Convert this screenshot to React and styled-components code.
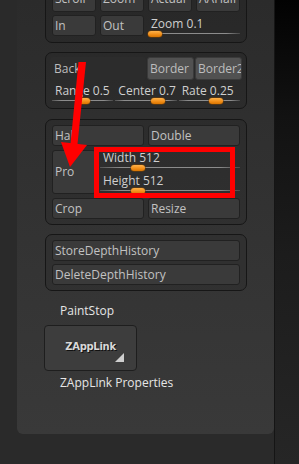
import React from 'react';
import styled, { createGlobalStyle } from 'styled-components';

const Global = createGlobalStyle`
  html, body { margin: 0; padding: 0; background: #2a2a2a; }
  body { font-family: "Open Sans", "Noto Sans", sans-serif; overflow: hidden; }
  * { box-sizing: border-box; }
`;

const Page = styled.div`
  position: relative;
  display: flex;
  width: 299px;
  height: 464px;
  overflow: hidden;
  background: #2a2a2a;
`;

const LeftGutter = styled.div`
  width: 17px;
  flex: none;
`;

const RightGutter = styled.div`
  width: 25px;
  flex: none;
  border-left: 1px solid #151515;
  background: linear-gradient(180deg, #020202 0%, #121212 25%, #1c1c1c 55%, #262626 100%);
`;

const Panel = styled.div`
  width: 257px;
  height: 434px;
  flex: none;
  display: flex;
  flex-direction: column;
  padding: 0 27px 0 28px;
  border-radius: 0 0 6px 6px;
  background: linear-gradient(180deg, #2b2b2b 0%, #313131 40%, #393939 100%);
`;

const Group = styled.div`
  display: flex;
  flex-direction: column;
  gap: ${p => p.$gap ?? 3}px;
  margin-top: ${p => p.$mt ?? 9}px;
  padding: ${p => p.$pad ?? '5px 6px'};
  border: 1px solid #161616;
  border-radius: 7px;
  background: rgba(0, 0, 0, 0.06);
`;

const Row = styled.div`
  position: relative;
  display: flex;
  gap: ${p => p.$gap ?? 4}px;
  height: ${p => p.$h ?? 21}px;
  margin: ${p => p.$m ?? '0'};
`;

const Btn = styled.div`
  flex: ${p => (p.$w ? 'none' : '1 1 0')};
  width: ${p => (p.$w ? `${p.$w}px` : 'auto')};
  display: flex;
  align-items: center;
  padding-left: 2px;
  padding-bottom: ${p => (p.$raise ? 5 : 0)}px;
  background: ${p => (p.$lit ? '#515151' : '#3a3a3a')};
  border: 1px solid ${p => (p.$lit ? '#3a3a3a' : '#212121')};
  border-radius: 3px;
  color: ${p => (p.$lit ? '#bdbdbd' : '#c2c2c2')};
  font-size: 12px;
  line-height: 14px;
  white-space: nowrap;
  overflow: hidden;
`;

const Well = styled.div`
  flex: 1 1 0;
  display: flex;
  align-items: center;
  padding-left: 4px;
  background: #2c2c2c;
  border-radius: 3px;
  color: #bdbdbd;
  font-size: 12px;
`;

const SliderBox = styled.div`
  position: relative;
  flex: ${p => (p.$w ? 'none' : '1 1 0')};
  width: ${p => (p.$w ? `${p.$w}px` : 'auto')};
  height: 22px;
  display: flex;
  flex-direction: column;
`;

const SliderLabel = styled.div`
  margin-top: 2px;
  padding-left: 3px;
  height: 14px;
  line-height: 14px;
  font-size: 12px;
  color: #cfcfcf;
  white-space: nowrap;
`;

const Track = styled.div`
  position: relative;
  margin-top: 2px;
  height: 1px;
  background: linear-gradient(90deg, rgba(140,140,140,0.4) 0%, #8c8c8c 15%, #8c8c8c 85%, rgba(140,140,140,0.3) 100%);
`;

const Handle = styled.div`
  position: absolute;
  top: -2px;
  width: 14px;
  height: 6px;
  border-radius: 3px;
  background: linear-gradient(180deg, #ffb24a 0%, #f08c16 60%, #d87400 100%);
  box-shadow: 0 0 0 0.5px #7a4000;
`;

const Column = styled.div`
  flex: 1 1 0;
  display: flex;
  flex-direction: column;
  gap: 0;
  margin-top: -1px;
`;

const RedBox = styled.div`
  position: absolute;
  left: 42px;
  top: -3px;
  width: 141px;
  height: 51px;
  border: 5px solid #ff0000;
  pointer-events: none;
`;

const Caption = styled.div`
  margin: ${p => p.$m};
  padding-left: 15px;
  height: 16px;
  line-height: 16px;
  font-size: 12px;
  color: #e6e6e6;
`;

const PluginBtn = styled.div`
  position: relative;
  width: 93px;
  height: 46px;
  margin: 6px 0 0 -1px;
  display: flex;
  align-items: center;
  justify-content: center;
  padding-bottom: 4px;
  background: #3d3d3d;
  border: 1px solid #1e1e1e;
  border-radius: 4px;
  font-family: "DejaVu Sans", sans-serif;
  font-weight: bold;
  font-size: 10px;
  color: #d8d8d8;
  text-shadow: 1px 1px 0 #111;
  letter-spacing: -0.3px;
`;

const Corner = styled.svg`
  position: absolute;
  right: 12px;
  bottom: 8px;
`;

const Arrow = styled.svg`
  position: absolute;
  left: 0;
  top: 0;
  pointer-events: none;
`;

const Slider = ({ label, pos, w }) => (
  <SliderBox $w={w}>
    <SliderLabel>{label}</SliderLabel>
    <Track>
      <Handle style={{ left: `calc(${pos * 100}% - 7px)` }} />
    </Track>
  </SliderBox>
);

export default function App() {
  return (
    <>
      <Global />
      <Page>
        <LeftGutter />
        <Panel>
          <Group $mt={-16} $pad="6px">
            <Row>
              <Btn $raise>Scroll</Btn>
              <Btn $raise>Zoom</Btn>
              <Btn $raise>Actual</Btn>
              <Btn $raise>AAHalf</Btn>
            </Row>
            <Row>
              <Btn $w={44}>In</Btn>
              <Btn $w={44}>Out</Btn>
              <Slider label="Zoom 0.1" pos={0.08} />
            </Row>
          </Group>

          <Group $pad="4px 6px" $gap={2}>
            <Row $h={23} $m="0 -2px" $gap={1}>
              <Well>Back</Well>
              <Btn $lit $w={47}>Border</Btn>
              <Btn $lit $w={47}>Border2</Btn>
            </Row>
            <Row $h={22} $gap={2}>
              <Slider label="Range 0.5" pos={0.5} />
              <Slider label="Center 0.7" pos={0.7} />
              <Slider label="Rate 0.25" pos={0.61} />
            </Row>
          </Group>

          <Group $mt={10} $gap={4}>
            <Row>
              <Btn>Half</Btn>
              <Btn>Double</Btn>
            </Row>
            <Row $h={44}>
              <Btn $w={44}>Pro</Btn>
              <Column>
                <Slider label="Width 512" pos={0.27} />
                <Slider label="Height 512" pos={0.27} />
              </Column>
              <RedBox />
            </Row>
            <Row>
              <Btn>Crop</Btn>
              <Btn>Resize</Btn>
            </Row>
          </Group>

          <Group>
            <Row>
              <Btn>StoreDepthHistory</Btn>
            </Row>
            <Row>
              <Btn>DeleteDepthHistory</Btn>
            </Row>
          </Group>

          <Caption $m="12px 0 0 0">PaintStop</Caption>
          <PluginBtn>
            ZAppLink
            <Corner width="9" height="9" viewBox="0 0 9 9">
              <polygon points="9,0 9,9 0,9" fill="#cfcfcf" />
            </Corner>
          </PluginBtn>
          <Caption $m="4px 0 0 0">ZAppLink Properties</Caption>
        </Panel>
        <RightGutter />
        <Arrow width="299" height="464" viewBox="0 0 299 464">
          <polygon points="78.5,62 86,62 77.5,144 70.5,144" fill="#ff0000" />
          <polygon points="61,142 87,145 70,167" fill="#ff0000" />
        </Arrow>
      </Page>
    </>
  );
}
